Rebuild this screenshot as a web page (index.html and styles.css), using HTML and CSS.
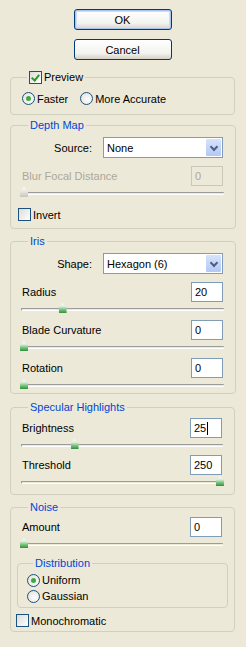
FILE: index.html
```html
<!DOCTYPE html>
<html lang="en">
<head>
    <meta charset="UTF-8">
    <title>Lens Blur</title>
    <link rel="stylesheet" href="styles.css">
</head>
<body>
    <div class="dialog">
        <div class="buttons">
            <button class="btn default">OK</button>
            <button class="btn">Cancel</button>
        </div>

        <fieldset class="group preview">
            <legend><span class="check checked"></span>Preview</legend>
            <div class="radios">
                <label class="radio-item"><span class="radio on"></span>Faster</label>
                <label class="radio-item"><span class="radio"></span>More Accurate</label>
            </div>
        </fieldset>

        <fieldset class="group">
            <legend class="title">Depth Map</legend>
            <div class="select-row">
                <span class="select-label">Source:</span>
                <div class="select"><span>None</span><span class="arrow"></span></div>
            </div>
            <div class="value-row disabled">
                <span>Blur Focal Distance</span>
                <span class="field">0</span>
            </div>
            <div class="slider"><div class="track"></div><span class="thumb faded" style="left: 0%"></span></div>
            <label class="check-row invert"><span class="check"></span>Invert</label>
        </fieldset>

        <fieldset class="group iris">
            <legend class="title">Iris</legend>
            <div class="select-row">
                <span class="select-label">Shape:</span>
                <div class="select"><span>Hexagon (6)</span><span class="arrow"></span></div>
            </div>
            <div class="value-row">
                <span>Radius</span>
                <span class="field">20</span>
            </div>
            <div class="slider"><div class="track"></div><span class="thumb" style="left: 19%"></span></div>
            <div class="value-row">
                <span>Blade Curvature</span>
                <span class="field">0</span>
            </div>
            <div class="slider"><div class="track"></div><span class="thumb" style="left: 0%"></span></div>
            <div class="value-row">
                <span>Rotation</span>
                <span class="field">0</span>
            </div>
            <div class="slider last"><div class="track"></div><span class="thumb" style="left: 0%"></span></div>
        </fieldset>

        <fieldset class="group specular">
            <legend class="title">Specular Highlights</legend>
            <div class="value-row">
                <span>Brightness</span>
                <span class="field">25<span class="caret"></span></span>
            </div>
            <div class="slider short"><div class="track"></div><span class="thumb" style="left: 25%"></span></div>
            <div class="value-row">
                <span>Threshold</span>
                <span class="field">250</span>
            </div>
            <div class="slider tall"><div class="track"></div><span class="thumb" style="left: 97%"></span></div>
        </fieldset>

        <fieldset class="group noise">
            <legend class="title">Noise</legend>
            <div class="value-row">
                <span>Amount</span>
                <span class="field">0</span>
            </div>
            <div class="slider"><div class="track"></div><span class="thumb" style="left: 0%"></span></div>
            <fieldset class="group sub">
                <legend class="title">Distribution</legend>
                <label class="radio-item"><span class="radio on"></span>Uniform</label>
                <label class="radio-item"><span class="radio"></span>Gaussian</label>
            </fieldset>
            <label class="check-row mono"><span class="check"></span>Monochromatic</label>
        </fieldset>
    </div>
</body>
</html>
```

FILE: styles.css
```css
body {
    margin: 0;
    background-color: #ece9d8;
    font-family: "Liberation Sans", Arial, sans-serif;
    font-size: 11px;
    color: #000;
}
.dialog {
    padding: 9px 11px 0 10px;
}
.buttons {
    display: flex;
    flex-direction: column;
    align-items: center;
    gap: 9px;
}
.btn {
    width: 98px;
    height: 21px;
    padding: 0;
    border: 1px solid #003c74;
    border-radius: 3px;
    background: linear-gradient(#ffffff, #f3f3ef 70%, #d6d0c5);
    font-family: inherit;
    font-size: 11px;
    color: #000;
}
.btn.default {
    box-shadow: inset 0 0 0 1px #a9c4f0, inset 0 0 0 2px #cfdcf5;
}

/* group boxes */
.group {
    margin: 4px 0 0 0;
    padding: 0 12px 0 11px;
    border: 1px solid #d0d0bf;
    border-radius: 4px;
}
.group legend {
    margin-left: 6px;
    padding: 0 2px;
    line-height: 13px;
}
.title {
    color: #0046d5;
}
.preview {
    margin-top: 11px;
    padding-bottom: 8px;
}
.preview legend {
    display: flex;
    align-items: center;
    gap: 2px;
    margin-left: 5px;
}
.radios {
    display: flex;
    gap: 12px;
    padding-top: 7px;
}
.radio-item {
    display: flex;
    align-items: center;
    gap: 2px;
    height: 15px;
}
.check-row {
    display: flex;
    align-items: center;
    gap: 2px;
    height: 13px;
}

/* checkboxes and radios */
.check {
    width: 11px;
    height: 11px;
    border: 1px solid #1c5180;
    background: linear-gradient(135deg, #dcdcd7, #ffffff);
    position: relative;
    flex: none;
}
.check.checked::after {
    content: "";
    position: absolute;
    left: 3px;
    top: 1px;
    width: 3px;
    height: 6px;
    border: solid #21a121;
    border-width: 0 2px 2px 0;
    transform: rotate(40deg);
}
.radio {
    width: 11px;
    height: 11px;
    border: 1px solid #1c5180;
    border-radius: 50%;
    background: radial-gradient(circle at 60% 60%, #ffffff, #dcdcd7);
    position: relative;
    flex: none;
}
.radio.on::after {
    content: "";
    position: absolute;
    left: 3px;
    top: 3px;
    width: 5px;
    height: 5px;
    border-radius: 50%;
    background: #3fa83f;
}

/* select rows */
.select-row {
    display: flex;
    align-items: center;
    padding-top: 5px;
}
.select-label {
    width: 70px;
    text-align: right;
    margin-right: 11px;
}
.select {
    display: flex;
    align-items: center;
    justify-content: space-between;
    width: 118px;
    height: 19px;
    border: 1px solid #7f9db9;
    background: #fff;
}
.select span:first-child {
    padding-left: 3px;
}
.arrow {
    width: 15px;
    height: 17px;
    margin-right: 1px;
    border-radius: 1px;
    background: linear-gradient(#d7e3fc, #b4c8f6);
    position: relative;
}
.arrow::after {
    content: "";
    position: absolute;
    left: 5px;
    top: 5px;
    width: 4px;
    height: 4px;
    border: solid #4d6185;
    border-width: 0 2px 2px 0;
    transform: rotate(45deg);
}

/* value rows */
.value-row {
    display: flex;
    align-items: center;
    justify-content: space-between;
    height: 20px;
}
.select-row + .value-row {
    margin-top: 8px;
}
.field {
    box-sizing: border-box;
    width: 32px;
    height: 20px;
    padding: 3px 3px 0;
    border: 1px solid #7f9db9;
    background: #fff;
    display: flex;
    align-items: flex-start;
}
.disabled {
    color: #aca899;
}
.disabled .field {
    border-color: #c9c7ba;
    background: #ece9d8;
}
.caret {
    width: 1px;
    height: 13px;
    background: #000;
    margin-left: 1px;
}

/* sliders */
.slider {
    position: relative;
    box-sizing: border-box;
    height: 18px;
    padding-top: 6px;
    margin: 0 -1px;
}
.slider.last {
    height: 15px;
}
.slider.short {
    height: 17px;
}
.slider.tall {
    height: 19px;
}
.track {
    height: 1px;
    border-top: 1px solid #9d9c99;
    border-bottom: 1px solid #ffffff;
    border-left: 1px solid #9d9c99;
    border-radius: 1px;
}
.thumb {
    position: absolute;
    top: 1px;
    width: 8px;
    height: 10px;
    margin-left: -1px;
    background: linear-gradient(#ffffff, #d8ecd8 35%, #7cc47c 65%, #2f8f3f);
    clip-path: polygon(50% 0, 100% 40%, 100% 100%, 0 100%, 0 40%);
}
.thumb.faded {
    background: linear-gradient(#ffffff, #e4e2da 50%, #c9c6ba);
}

.invert {
    margin: 4px 0 7px -4px;
}
.iris {
    margin-top: 6px;
}
.specular {
    margin-top: 7px;
}
.specular legend + .value-row {
    margin-top: 4px;
}
.noise {
    margin-top: 6px;
}
.noise legend + .value-row {
    margin-top: 3px;
}
.sub {
    margin: 2px -6px 0 -5px;
    padding: 0 10px 3px 9px;
}
.sub legend + .radio-item {
    margin-top: 2px;
}
.sub .radio-item {
    height: 16px;
}
.mono {
    margin: 6px 0 4px -6px;
}
```
